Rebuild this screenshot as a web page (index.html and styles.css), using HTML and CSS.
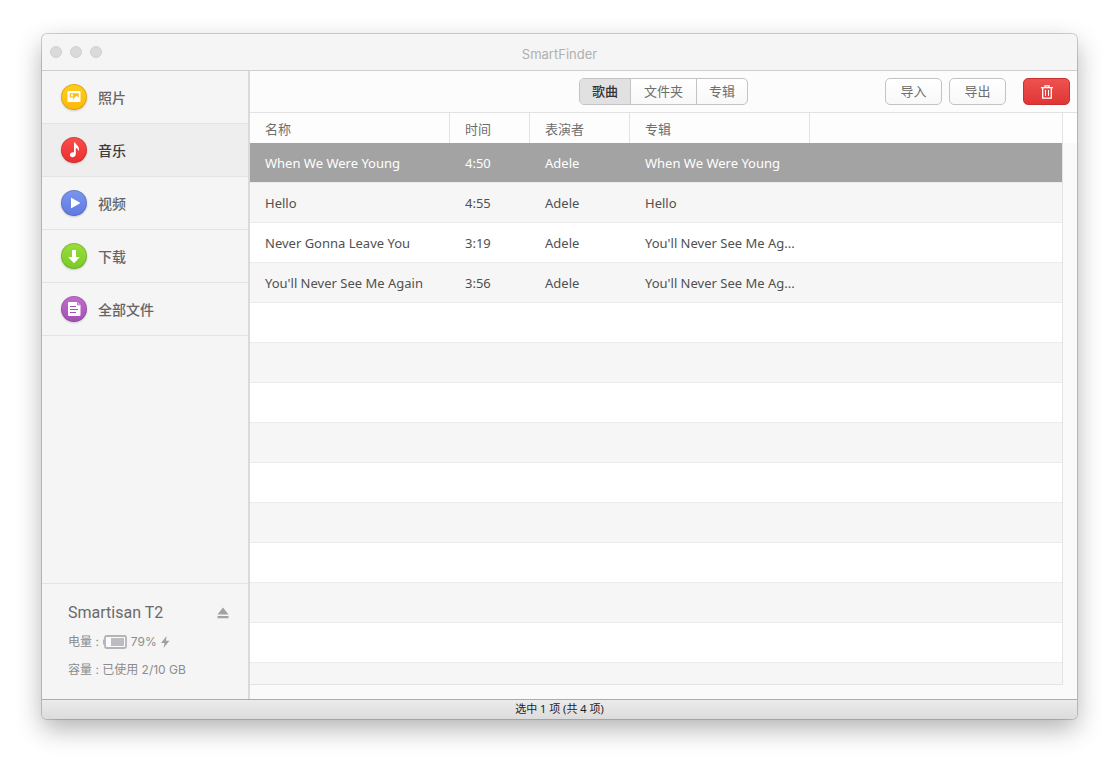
FILE: index.html
```html
<!DOCTYPE html>
<html lang="zh-CN">
<head>
<meta charset="utf-8">
<meta name="viewport" content="width=device-width, initial-scale=1">
<title>SmartFinder</title>
<link rel="stylesheet" href="styles.css">
</head>
<body>
<div class="window">
  <header class="titlebar">
    <div class="lights">
      <button class="light" type="button" aria-label="关闭"></button>
      <button class="light" type="button" aria-label="最小化"></button>
      <button class="light" type="button" aria-label="缩放"></button>
    </div>
    <h1 class="title">SmartFinder</h1>
  </header>

  <div class="body">
    <aside class="sidebar">
      <nav class="nav">
        <a class="nav-item" href="#photos">
          <svg class="badge badge-yellow" viewBox="0 0 26 26" aria-hidden="true">
            <rect x="6.500" y="7" width="13" height="11" rx=".8" fill="#fff"/>
            <path fill="#fbbd12" d="M8.800 9.200h8.900v4.600l-2.500-2-3.200 3.800v-2H8.800z"/>
            <rect x="10" y="10.300" width="2" height="2.100" fill="#fff"/>
          </svg>
          <span class="nav-label">照片</span>
        </a>
        <a class="nav-item is-active" href="#music" aria-current="page">
          <svg class="badge badge-red" viewBox="0 0 26 26" aria-hidden="true">
            <path fill="#fff" d="M13 5.500h1.300c.2 2.200 3.700 3.200 3.700 6.500 0 1-.3 1.700-.8 2.300.1-2-1-3-2.400-3.300v5.700c0 2-1.500 3.500-3.300 3.500-1.600 0-2.600-.9-2.600-2.200 0-1.500 1.400-2.700 3-2.700.5 0 .8.100 1.100.2z"/>
          </svg>
          <span class="nav-label">音乐</span>
        </a>
        <a class="nav-item" href="#video">
          <svg class="badge badge-blue" viewBox="0 0 26 26" aria-hidden="true">
            <path fill="#fff" d="M10 8.200v9.600c0 .4.400.5.700.3l8-4.700c.3-.2.300-.6 0-.8l-8-4.700c-.3-.2-.7-.1-.7.300z"/>
          </svg>
          <span class="nav-label">视频</span>
        </a>
        <a class="nav-item" href="#downloads">
          <svg class="badge badge-green" viewBox="0 0 26 26" aria-hidden="true">
            <path fill="#fff" d="M11 7h4v7h3.200c.3 0 .4.300.2.500l-4.900 5.200a.7.700 0 0 1-1 0L7.600 14.500c-.2-.2-.1-.5.200-.5H11z"/>
          </svg>
          <span class="nav-label">下载</span>
        </a>
        <a class="nav-item" href="#files">
          <svg class="badge badge-purple" viewBox="0 0 26 26" aria-hidden="true">
            <path fill="#fff" d="M8 6h8l3.500 3V19a1 1 0 0 1-1 1H8a1 1 0 0 1-1-1V7a1 1 0 0 1 1-1z"/>
            <path fill="none" stroke="#a552b5" d="M9 10.500h6M9 13.500h8M9 16.500h6"/>
            <path fill="none" stroke="#a552b5" stroke-width=".8" d="M16.500 6.500v2.300h2.500"/>
          </svg>
          <span class="nav-label">全部文件</span>
        </a>
      </nav>

      <section class="device">
        <div class="device-head">
          <h2 class="device-name">Smartisan T2</h2>
          <button class="eject" type="button" aria-label="推出">
            <svg width="12" height="12" viewBox="0 0 12 12" aria-hidden="true">
              <path fill="#a2a2a2" d="M6 .5 11.500 7.500H.5zM.5 9h11v2.200H.5z"/>
            </svg>
          </button>
        </div>
        <p class="device-line">
          <span>电量 :</span>
          <svg class="battery" width="24" height="14" viewBox="0 0 24 14" aria-hidden="true">
            <rect x="2" y="1" width="21" height="12" rx="1.500" fill="#fafafa" stroke="#b4b4b6" stroke-width="1.800"/>
            <path fill="#b4b4b6" d="M0 4.500h2v5H0z"/>
            <path fill="#bdbdc1" d="M8 3h13v8H8z"/>
          </svg>
          <span>79%</span>
          <svg width="9" height="12" viewBox="0 0 9 12" aria-hidden="true">
            <path fill="#a2a2a2" d="M5.500 0 0 7h3.500L2.500 12 8.500 4.800H5z"/>
          </svg>
        </p>
        <p class="device-line">容量 : 已使用 2/10 GB</p>
      </section>
    </aside>

    <main class="main">
      <div class="toolbar">
        <div class="segments" role="group" aria-label="视图">
          <button class="segment is-selected" type="button" aria-pressed="true">歌曲</button>
          <button class="segment" type="button" aria-pressed="false">文件夹</button>
          <button class="segment" type="button" aria-pressed="false">专辑</button>
        </div>
        <div class="actions">
          <button class="action" type="button">导入</button>
          <button class="action" type="button">导出</button>
          <button class="action action-delete" type="button" aria-label="删除">
            <svg width="12" height="14" viewBox="0 0 12 14" fill="none" stroke="#fff" aria-hidden="true">
              <path stroke-width="1.300" d="M0 2.700h12M4 2.500V.8h4v1.700M1.700 3v10.200h8.600V3"/>
              <path d="M4.500 5v6M7.500 5v6"/>
            </svg>
          </button>
        </div>
      </div>

      <div class="list">
        <div class="list-scroll">
          <table class="songs">
            <colgroup>
              <col class="col-name"><col class="col-time"><col class="col-artist"><col class="col-album"><col>
            </colgroup>
            <thead>
              <tr><th scope="col">名称</th><th scope="col">时间</th><th scope="col">表演者</th><th scope="col">专辑</th><th></th></tr>
            </thead>
            <tbody>
              <tr class="is-selected"><td>When We Were Young</td><td>4:50</td><td>Adele</td><td>When We Were Young</td><td></td></tr>
              <tr><td>Hello</td><td>4:55</td><td>Adele</td><td>Hello</td><td></td></tr>
              <tr><td>Never Gonna Leave You</td><td>3:19</td><td>Adele</td><td>You'll Never See Me Ag...</td><td></td></tr>
              <tr><td>You'll Never See Me Again</td><td>3:56</td><td>Adele</td><td>You'll Never See Me Ag...</td><td></td></tr>
            </tbody>
          </table>
        </div>
      </div>
    </main>
  </div>

  <footer class="status">选中 1 项 (共 4 项)</footer>
</div>
</body>
</html>
```

FILE: styles.css
```css
* {
  box-sizing: border-box;
}

body {
  margin: 0;
  min-height: 100vh;
  display: flex;
  padding: 34px 42px 50px;
  background: #fff;
  color: #505050;
  font: 13px/20px "Noto Sans", "Noto Sans CJK SC", sans-serif;
}

h1, h2, p {
  margin: 0;
  font-weight: 400;
}

button {
  margin: 0;
  padding: 0;
  border: 0;
  background: none;
  color: inherit;
  font: inherit;
}

.window {
  flex: 1;
  min-width: 0;
  display: flex;
  flex-direction: column;
  overflow: hidden;
  border-radius: 5px;
  background: #f5f5f5;
  box-shadow: 0 0 0 1px rgba(0, 0, 0, 0.17), 0 10px 26px rgba(0, 0, 0, 0.3);
}

.titlebar {
  display: grid;
  grid-template-columns: 1fr auto 1fr;
  align-items: center;
  height: 37px;
  border-bottom: 1px solid #cfcfcf;
}

.lights {
  display: flex;
  gap: 8px;
  padding-left: 8px;
}

.light {
  width: 12px;
  height: 12px;
  border: 1px solid #d0d0d0;
  border-radius: 50%;
  background: #dadada;
}

.title {
  padding-top: 3px;
  color: #b0b0b0;
  font-family: Inter, sans-serif;
  font-size: 13px;
}

.body {
  flex: 1;
  min-height: 0;
  display: flex;
}

.sidebar {
  flex: none;
  width: 208px;
  display: flex;
  flex-direction: column;
  justify-content: space-between;
  border-right: 2px solid #dadada;
}

.nav-item {
  display: flex;
  align-items: center;
  gap: 11px;
  height: 53px;
  padding-left: 19px;
  border-bottom: 1px solid #e4e4e4;
  color: #656567;
  font-family: Inter, "Noto Sans CJK SC", sans-serif;
  font-size: 14px;
  font-weight: 500;
  text-decoration: none;
}

.nav-label {
  padding-top: 2px;
}

.nav-item.is-active {
  background: #eee;
  color: #3c3c3e;
}

.badge {
  width: 26px;
  height: 26px;
  border-radius: 50%;
  box-shadow: inset 0 0 0 1px rgba(0, 0, 0, 0.14), 0 1px 2px rgba(0, 0, 0, 0.18);
}

.badge-yellow { background: linear-gradient(#ffcd1c, #fdb90c); }
.badge-red { background: linear-gradient(#fb4d4b, #e92f30); }
.badge-blue { background: linear-gradient(#7c96ee, #5f7ae2); }
.badge-green { background: linear-gradient(#9ade3c, #7ac928); }
.badge-purple { background: linear-gradient(#c06fcb, #a34fb5); }

.device {
  padding: 19px 19px 19px 26px;
  border-top: 1px solid #e4e4e4;
  color: #8c8c8c;
  font-family: Inter, "Noto Sans CJK SC", sans-serif;
  font-size: 12px;
  font-weight: 500;
}

.device-head {
  display: flex;
  align-items: center;
  justify-content: space-between;
  margin-bottom: 9px;
}

.device-name {
  color: #6a6a6a;
  font-family: Roboto, sans-serif;
  font-size: 16px;
}

.eject {
  display: flex;
}

.device-line {
  display: flex;
  align-items: center;
  gap: 4px;
}

.device-line + .device-line {
  margin-top: 8px;
}

.main {
  flex: 1;
  min-width: 0;
  display: flex;
  flex-direction: column;
  background: #fafafa;
}

.toolbar {
  display: grid;
  grid-template-columns: 1fr auto 1fr;
  align-items: center;
  height: 42px;
  padding: 0 7px;
  border-bottom: 1px solid #e2e2e2;
  background: #fcfcfc;
  color: #6e6e6e;
  font-family: Inter, "Noto Sans CJK SC", sans-serif;
}

.segments {
  grid-column: 2;
  display: flex;
  height: 27px;
  overflow: hidden;
  border: 1px solid #c3c3c3;
  border-radius: 5px;
  background: linear-gradient(#fff, #f8f8f8);
}

.segment {
  padding: 0 12px 2px;
}

.segment:nth-child(2) {
  padding: 0 13px 2px;
}

.segment + .segment {
  border-left: 1px solid #c3c3c3;
}

.segment.is-selected {
  background: #e1e1e1;
  color: #333;
  font-weight: 500;
}

.actions {
  display: flex;
  justify-content: flex-end;
  gap: 7px;
}

.action {
  display: flex;
  align-items: center;
  justify-content: center;
  width: 57px;
  height: 27px;
  padding-bottom: 2px;
  border: 1px solid #c3c3c3;
  border-radius: 5px;
  background: linear-gradient(#fff, #f8f8f8);
}

.action-delete {
  width: 47px;
  margin-left: 10px;
  padding-bottom: 0;
  border-color: #c9302f;
  background: linear-gradient(#ee5250, #df3635);
}

.list {
  flex: 1;
  min-height: 0;
  display: flex;
  padding: 0 14px 14px 0;
  background: linear-gradient(#fff 30px, #fafafa 30px);
}

.list-scroll {
  flex: 1;
  min-width: 0;
  overflow: hidden;
  border: solid #e4e4e4;
  border-width: 0 1px 1px 0;
  background: repeating-linear-gradient(#fff 0 39px, #ebebeb 39px 40px, #f6f6f6 40px 79px, #ebebeb 79px 80px) 0 30px;
}

.songs {
  width: 100%;
  table-layout: fixed;
  border-collapse: separate;
  border-spacing: 0;
}

.col-name { width: 200px; }
.col-time { width: 80px; }
.col-artist { width: 100px; }
.col-album { width: 180px; }

.songs th,
.songs td {
  padding: 0 0 0 15px;
  overflow: hidden;
  text-align: left;
  text-overflow: ellipsis;
  white-space: nowrap;
}

.songs th {
  height: 30px;
  padding-top: 2px;
  border-right: 1px solid #e2e2e2;
  background: #fdfdfd;
  color: #6e6e6e;
  font-weight: 400;
}

.songs th:last-child {
  border-right: 0;
}

.songs td {
  height: 40px;
  border-bottom: 1px solid #ebebeb;
}

.songs .is-selected td {
  background: #a3a3a3;
  color: #fff;
}

.status {
  height: 20px;
  border-top: 1px solid #acacac;
  background: linear-gradient(#ebebeb, #dcdcdc);
  color: #1e1e1e;
  font-size: 11px;
  line-height: 18px;
  text-align: center;
}
```
